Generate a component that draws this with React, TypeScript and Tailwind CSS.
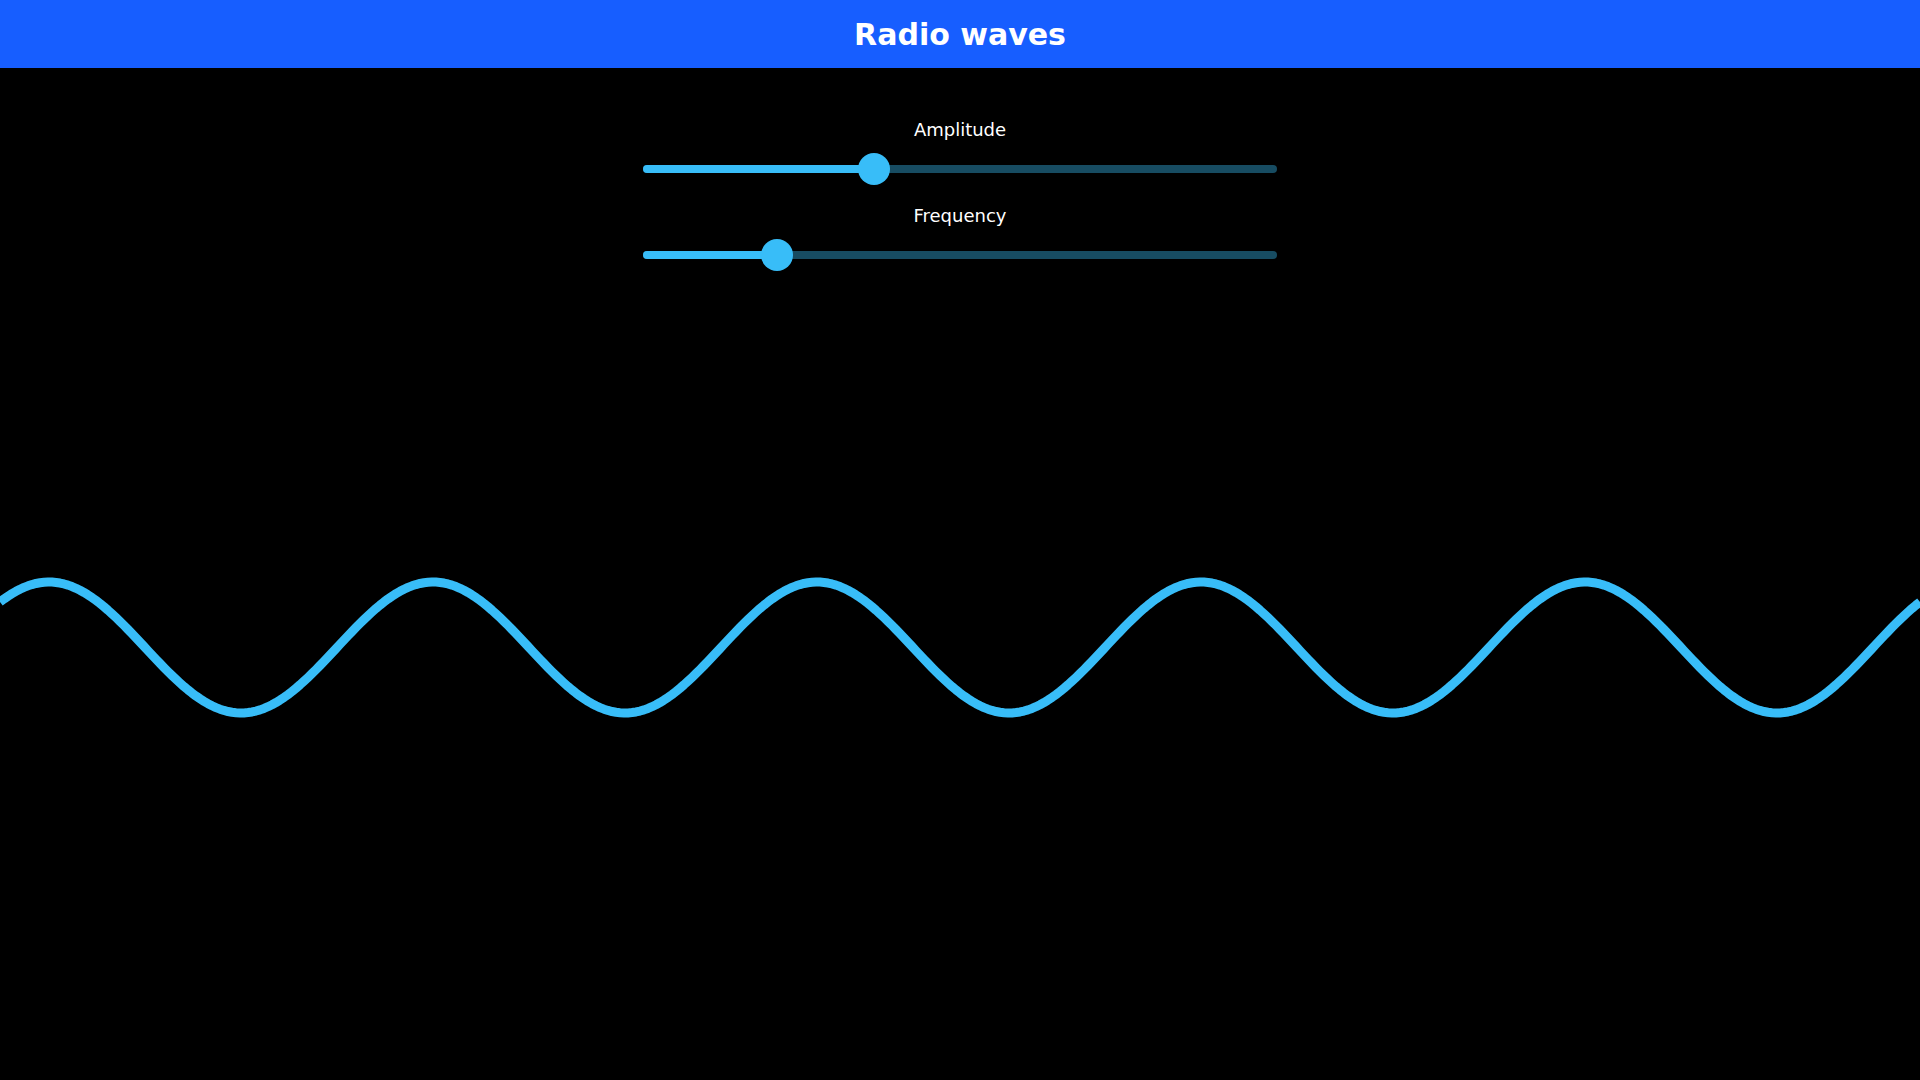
import * as React from 'react';

type SliderProps = {
  label: string
  value: number  // thumb position in px from track start
}

const Slider = ({label, value}: SliderProps) => {
  return (
    <div className="flex flex-col items-center">
      <p className="text-[18px] leading-[22px] text-white">{label}</p>
      <div className="relative mt-3 flex h-8 w-[634px] items-center">
        <div className="h-2 w-full rounded-full bg-[#174c62]" />
        <div
          className="absolute left-0 top-3 h-2 rounded-l-full bg-[#38bdf8]"
          style={{width: value}}
        />
        <div
          className="absolute top-0 h-8 w-8 -translate-x-1/2 rounded-full bg-[#38bdf8]"
          style={{left: value}}
        />
      </div>
    </div>
  )
}

// sine wave path, 5 full periods across the page
const wavePath = () => {
  const width = 1920
  const period = 384
  const amp = 65.5
  const mid = 376.5
  const phase = 47
  let d = ''
  for (let x = 0; x <= width; x += 4) {
    const y = mid - amp * Math.sin((2 * Math.PI * (x + phase)) / period)
    d += `${x === 0 ? 'M' : 'L'}${x} ${y.toFixed(2)} `
  }
  return d
}

export default function App() {
  const [amplitude] = React.useState(231)
  const [frequency] = React.useState(134)

  return (
    <div className="flex h-[1080px] w-full flex-col overflow-hidden bg-black font-['DejaVu_Sans',sans-serif]">
      <header className="flex h-[68px] shrink-0 items-center justify-center bg-[#175eff]">
        <h1 className="text-[30px] font-bold text-white">Radio waves</h1>
      </header>

      <div className="flex flex-col items-center gap-5 pt-[51px]">
        <Slider label="Amplitude" value={amplitude} />
        <Slider label="Frequency" value={frequency} />
      </div>

      <div className="flex-1">
        <svg width="1920" height="809" viewBox="0 0 1920 809" className="block">
          <path d={wavePath()} fill="none" stroke="#38bdf8" strokeWidth="9" strokeLinejoin="round" />
        </svg>
      </div>
    </div>
  )
}
